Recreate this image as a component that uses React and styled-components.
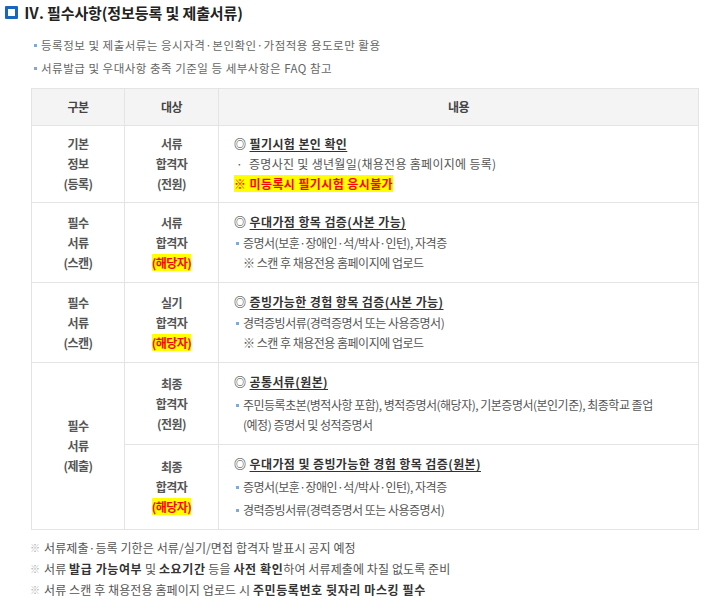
import React from "react";
import styled, { createGlobalStyle } from "styled-components";

const GlobalStyle = createGlobalStyle`
  body {
    margin: 0;
    background: #fff;
    font-family: "Noto Sans CJK KR", "Noto Sans", sans-serif;
  }
`;

const Page = styled.section`
  padding: 1px 12px 0 5px;
`;

const Title = styled.h2`
  display: flex;
  align-items: center;
  gap: 6px;
  margin: 0;
  height: 22px;
  font-size: 15px;
  font-weight: 700;
  letter-spacing: -0.1px;
  color: #222;
`;

const TitleIcon = styled.span`
  width: 13px;
  height: 13px;
  box-sizing: border-box;
  border: 3px solid #1b66bd;
  border-radius: 1px;
`;

const Intro = styled.ul`
  list-style: none;
  margin: 11px 0 0 29px;
  padding: 0;
`;

const IntroItem = styled.li`
  display: flex;
  align-items: center;
  gap: 4px;
  font-size: 11.5px;
  line-height: 23px;
  letter-spacing: 0.5px;
  color: #666;

  &::before {
    content: "";
    width: 3px;
    height: 3px;
    background: #7eaad8;
  }
`;

const Table = styled.table`
  width: 668px;
  margin: 8px 0 0 26px;
  border-collapse: collapse;
  font-size: 12px;
  letter-spacing: -0.5px;
  line-height: 20px;

  th,
  td {
    border: 1px solid #e4e4e4;
  }
`;

const HeadCell = styled.th`
  width: ${(p) => p.$w || "auto"};
  padding: 8px 0;
  background: #f4f4f4;
  font-weight: 700;
  color: #444;
`;

const GroupCell = styled.td`
  padding: 8px 0;
  text-align: center;
  vertical-align: middle;
  font-weight: 700;
  color: #555;
`;

const Mark = styled.span`
  color: #f00;
  background: #ff0;
  font-weight: 700;
  letter-spacing: ${(p) => p.$ls || "-0.5px"};
`;

const BodyCell = styled.td`
  padding: ${(p) => p.$pad || "9px"} 14px ${(p) => p.$pad || "9px"} 15px;
  vertical-align: middle;
  color: #555;
`;

const Topic = styled.div`
  font-weight: 700;
  color: #333;
  letter-spacing: 0.4px;

  u {
    text-underline-offset: 2px;
  }
`;

const Line = styled.div`
  padding-left: 2px;
  letter-spacing: 0.3px;
`;

const Item = styled.div`
  position: relative;
  padding-left: 9px;
  margin-top: ${(p) => p.$gap || "1px"};
  line-height: 20px;

  &::before {
    content: "";
    position: absolute;
    left: 2px;
    top: 9px;
    width: 3px;
    height: 3px;
    background: #7eaad8;
  }
`;

const Notes = styled.ul`
  list-style: none;
  margin: 7px 0 0 25px;
  padding: 0;
`;

const Note = styled.li`
  display: flex;
  align-items: center;
  font-size: 12px;
  line-height: 21px;
  letter-spacing: 0.1px;
  color: #555;

  &::before {
    content: "※";
    width: 14px;
    font-size: 10px;
    color: #b0b0b0;
  }

  b {
    color: #333;
    letter-spacing: 0.6px;
  }
`;

const Topics = ({ children }) => (
  <Topic>
    ◎ <u>{children}</u>
  </Topic>
);

export default function App() {
  return (
    <Page>
      <GlobalStyle />
      <Title>
        <TitleIcon />
        Ⅳ. 필수사항(정보등록 및 제출서류)
      </Title>
      <Intro>
        <IntroItem>등록정보 및 제출서류는 응시자격·본인확인·가점적용 용도로만 활용</IntroItem>
        <IntroItem>서류발급 및 우대사항 충족 기준일 등 세부사항은 FAQ 참고</IntroItem>
      </Intro>

      <Table>
        <thead>
          <tr>
            <HeadCell $w="92px">구분</HeadCell>
            <HeadCell $w="93px">대상</HeadCell>
            <HeadCell>내용</HeadCell>
          </tr>
        </thead>
        <tbody>
          <tr>
            <GroupCell>
              기본
              <br />
              정보
              <br />
              (등록)
            </GroupCell>
            <GroupCell>
              서류
              <br />
              합격자
              <br />
              (전원)
            </GroupCell>
            <BodyCell $pad="7px">
              <Topics>필기시험 본인 확인</Topics>
              <Line>·&nbsp; 증명사진 및 생년월일(채용전용 홈페이지에 등록)</Line>
              <Mark $ls="0.4px">※ 미등록시 필기시험 응시불가</Mark>
            </BodyCell>
          </tr>
          <tr>
            <GroupCell>
              필수
              <br />
              서류
              <br />
              (스캔)
            </GroupCell>
            <GroupCell>
              서류
              <br />
              합격자
              <br />
              <Mark>(해당자)</Mark>
            </GroupCell>
            <BodyCell>
              <Topics>우대가점 항목 검증(사본 가능)</Topics>
              <Item>
                증명서(보훈·장애인·석/박사·인턴), 자격증
                <br />※ 스캔 후 채용전용 홈페이지에 업로드
              </Item>
            </BodyCell>
          </tr>
          <tr>
            <GroupCell>
              필수
              <br />
              서류
              <br />
              (스캔)
            </GroupCell>
            <GroupCell>
              실기
              <br />
              합격자
              <br />
              <Mark>(해당자)</Mark>
            </GroupCell>
            <BodyCell>
              <Topics>증빙가능한 경험 항목 검증(사본 가능)</Topics>
              <Item>
                경력증빙서류(경력증명서 또는 사용증명서)
                <br />※ 스캔 후 채용전용 홈페이지에 업로드
              </Item>
            </BodyCell>
          </tr>
          <tr>
            <GroupCell rowSpan={2}>
              필수
              <br />
              서류
              <br />
              (제출)
            </GroupCell>
            <GroupCell>
              최종
              <br />
              합격자
              <br />
              (전원)
            </GroupCell>
            <BodyCell>
              <Topics>공통서류(원본)</Topics>
              <Item $gap="3px">
                주민등록초본(병적사항 포함), 병적증명서(해당자), 기본증명서(본인기준), 최종학교 졸업
                <br />
                (예정) 증명서 및 성적증명서
              </Item>
            </BodyCell>
          </tr>
          <tr>
            <GroupCell>
              최종
              <br />
              합격자
              <br />
              <Mark>(해당자)</Mark>
            </GroupCell>
            <BodyCell>
              <Topics>우대가점 및 증빙가능한 경험 항목 검증(원본)</Topics>
              <Item $gap="3px">증명서(보훈·장애인·석/박사·인턴), 자격증</Item>
              <Item $gap="3px">경력증빙서류(경력증명서 또는 사용증명서)</Item>
            </BodyCell>
          </tr>
        </tbody>
      </Table>

      <Notes>
        <Note>서류제출·등록 기한은 서류/실기/면접 합격자 발표시 공지 예정</Note>
        <Note>
          서류&nbsp;<b>발급 가능여부</b>&nbsp;및&nbsp;<b>소요기간</b>&nbsp;등을&nbsp;<b>사전 확인</b>하여 서류제출에 차질 없도록 준비
        </Note>
        <Note>
          서류 스캔 후 채용전용 홈페이지 업로드 시&nbsp;<b>주민등록번호 뒷자리 마스킹 필수</b>
        </Note>
      </Notes>
    </Page>
  );
}
